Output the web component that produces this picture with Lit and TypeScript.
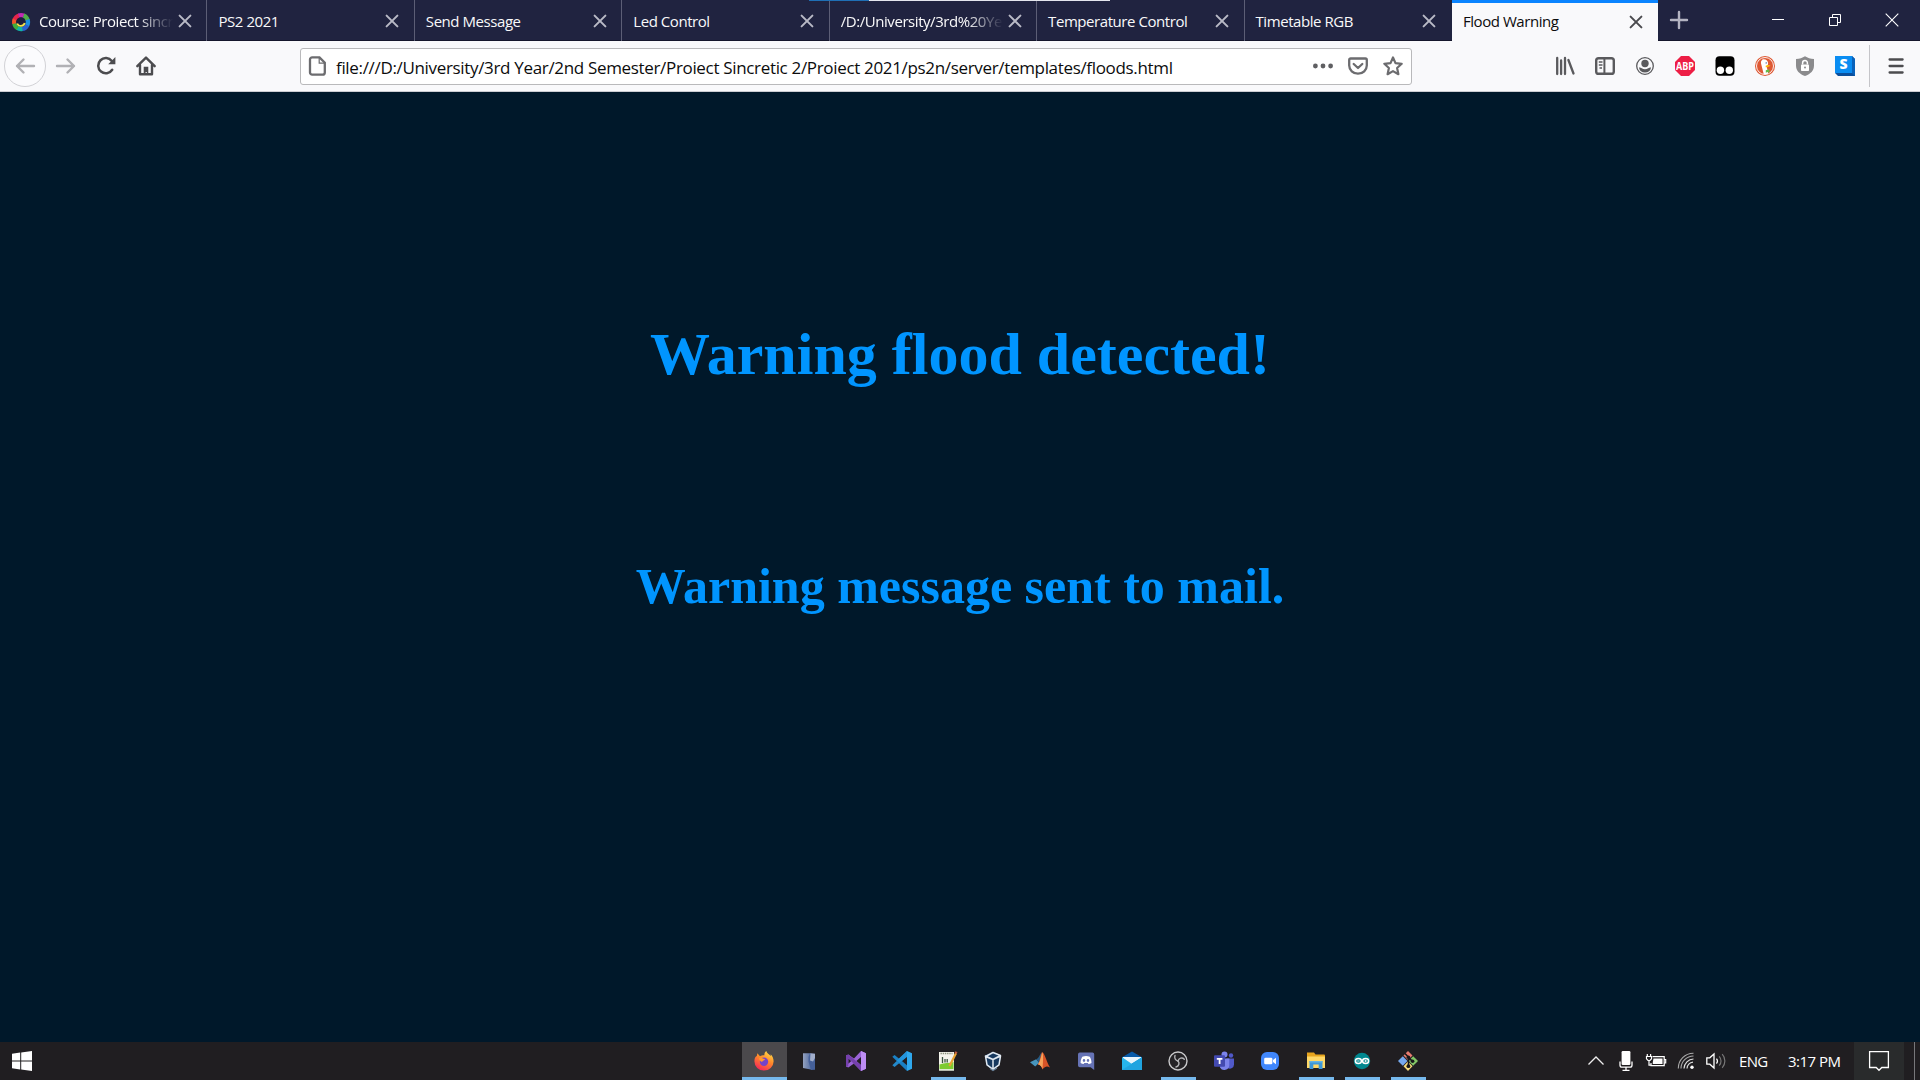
import { LitElement, html, css, svg, nothing, TemplateResult, SVGTemplateResult } from "lit";
import { customElement, property } from "lit/decorators.js";
import { classMap } from "lit/directives/class-map.js";

const icons: Record<string, SVGTemplateResult> = {
  moodle: svg`<g fill="none" stroke-width="4.2">
    <path d="M3.4 8A7 7 0 0 1 8 3.4" stroke="#e6254a"/><path d="M7.6 3.5A7 7 0 0 1 13 3.7" stroke="#c22bb4"/>
    <path d="M12.6 3.5A7 7 0 0 1 16.8 8.4" stroke="#4fae4a"/><path d="M16.6 7.6A7 7 0 0 1 16 13.6" stroke="#1b8fe0"/>
    <path d="M16.3 13.2A7 7 0 0 1 11 17" stroke="#2b62d0"/><path d="M11.4 17A7 7 0 0 1 6 15.8" stroke="#12b4a9"/>
    <path d="M6.6 16.2A7 7 0 0 1 3.2 11" stroke="#3fae3a"/><path d="M3.2 11.6A7 7 0 0 1 3.6 7.4" stroke="#f0552a"/></g>
    <circle cx="9.6" cy="9.8" r="4.3" fill="#1d1e3a"/><path d="M6.2 11.5a4 4 0 0 0 7.500-.5" fill="none" stroke="#f3e34a" stroke-width="1.8"/>`,
  back: svg`<path d="M19 10H2M8.500 3.500L2 10l6.500 6.500" fill="none" stroke="#b1b1b5" stroke-width="2.400" stroke-linecap="round" stroke-linejoin="round"/>`,
  forward: svg`<path d="M1 10h17M11.500 3.500L18 10l-6.500 6.500" fill="none" stroke="#b1b1b5" stroke-width="2.400" stroke-linecap="round" stroke-linejoin="round"/>`,
  reload: svg`<path d="M16.200 13.800A7.600 7.600 0 1 1 15.800 5" fill="none" stroke="#4c4c4f" stroke-width="2.500" stroke-linecap="round"/><path d="M19.400 1v7.200h-7.200z" fill="#4c4c4f"/>`,
  home: svg`<path d="M1.300 10.200L10 1.600l8.700 8.600M4 9v9.200h12V9" fill="none" stroke="#4c4c4f" stroke-width="2.400" stroke-linecap="round" stroke-linejoin="round"/><path d="M7.700 18v-7.300h4.600V18h-1.500v-2h-1.200v2z" fill="#4c4c4f"/>`,
  page: svg`<path d="M4.200 1.400h7.300l5.300 5.300v9.700a2.200 2.200 0 0 1-2.200 2.200H4.200A2.200 2.200 0 0 1 2 16.400V3.600a2.200 2.200 0 0 1 2.200-2.200z" fill="none" stroke="#6c6c6f" stroke-width="2.300"/><path d="M11.200 2v5.200h5.200" fill="none" stroke="#6c6c6f" stroke-width="1.200"/>`,
  dots: svg`<g fill="#5f5f62"><circle cx="2.400" cy="10" r="2.400"/><circle cx="10" cy="10" r="2.400"/><circle cx="17.600" cy="10" r="2.400"/></g>`,
  pocket: svg`<path d="M2.600 2.500h14.800a1.400 1.400 0 0 1 1.400 1.400v5.600a8.800 8.200 0 0 1-17.600 0V3.900a1.400 1.400 0 0 1 1.400-1.400z" fill="none" stroke="#6c6c6f" stroke-width="2.300"/><path d="M5.700 8l4.300 4 4.300-4" fill="none" stroke="#6c6c6f" stroke-width="2.300" stroke-linecap="round" stroke-linejoin="round"/>`,
  star: svg`<path d="M10 1.500l2.500 5.600 6.200.7-4.600 4.200 1.300 6.200L10 15.100l-5.400 3.100L5.900 12 1.300 7.800l6.200-.7z" fill="none" stroke="#6c6c6f" stroke-width="2.200" stroke-linejoin="round"/>`,
  library: svg`<path d="M2.200 2v16M6.100 4.500V18M10 2v16M13.400 4l5.100 13.500" fill="none" stroke="#5a5a5d" stroke-width="2.300" stroke-linecap="round"/>`,
  sidebar: svg`<rect x="1.200" y="2.200" width="17.600" height="15.600" rx="2.400" fill="none" stroke="#5a5a5d" stroke-width="2.400"/><path d="M9.400 2v16" stroke="#5a5a5d" stroke-width="2"/><path d="M3.800 6H7.500M3.800 9H7.500M4.500 12H7" stroke="#5a5a5d" stroke-width="1.300"/>`,
  account: svg`<circle cx="10" cy="10" r="8.300" fill="none" stroke="#5a5a5d" stroke-width="1.300"/><circle cx="10" cy="7.500" r="3.700" fill="#5a5a5d"/><path d="M3.900 11.500c1.500.2 2.200.2 2.800.7a6 6 0 0 0 6.600 0c.6-.5 1.300-.5 2.800-.7A6.400 6.400 0 0 1 10 16.600a6.400 6.400 0 0 1-6.100-5.100z" fill="#5a5a5d"/>`,
  abp: svg`<path d="M6 0h8l6 6v8l-6 6H6l-6-6V6z" fill="#ed1e45"/><text x="10" y="13.800" text-anchor="middle" font-family="Open Sans, sans-serif" font-weight="700" font-size="10.500" textLength="18" lengthAdjust="spacingAndGlyphs" fill="#fff">ABP</text>`,
  tamper: svg`<rect x=".5" y=".3" width="19" height="19.400" rx="4" fill="#000"/><circle cx="5.400" cy="14.300" r="3.700" fill="#fff"/><circle cx="14.300" cy="14.300" r="3.700" fill="#fff"/>`,
  duck: svg`<circle cx="10" cy="10" r="10" fill="#de5833"/><circle cx="10" cy="10" r="8.500" fill="none" stroke="#fff" stroke-width=".9"/><path d="M8.700 18L6.400 9C5.500 6 6 4.400 7.600 3.800 7 3.400 7.500 3 8.500 3.200c3 .1 4.600 1.800 4.600 4.300 0 1.500-1.200 2.300-1.200 4l1.300 6.300c-1.500.5-3 .6-4.500.2z" fill="#fff"/><path d="M10.700 9.700c1.500-1 3.500-.8 4.800-.2-1 1.300-2.900 1.900-4.800 1.800z" fill="#fdb90d"/><path d="M10.800 14.200l3.600-1v3.600l-1.800-.8-1.800.7z" fill="#65bc46"/><circle cx="11.200" cy="6.900" r=".7" fill="#2d4f8e"/>`,
  shield: svg`<path d="M10 .2c2.500 1.700 5.500 2.600 9 2.700v6.500c0 5-3.300 8.500-9 10.500-5.700-2-9-5.500-9-10.500V2.900C4.500 2.800 7.500 1.900 10 .2z" fill="#8b8b8d"/><rect x="6" y="8.500" width="8" height="6.500" rx=".8" fill="#fff"/><path d="M7.600 8.500V7a2.400 2.400 0 0 1 4.800 0v1.500" fill="none" stroke="#fff" stroke-width="1.500"/><circle cx="10" cy="11.600" r="1" fill="#8b8b8d"/>`,
  stylish: svg`<path d="M0 0h17l3 3v17H3l-3-3z" fill="#0b4f9c"/><path d="M0 0h17v17H0z" fill="#0a8df2"/><path d="M17 0l3 3v17l-3-3z" fill="#0a62ba"/><text x="8.500" y="13.300" text-anchor="middle" font-family="Open Sans, sans-serif" font-weight="800" font-size="14" fill="#fff">S</text>`,
  menu: svg`<path d="M3.600 3.500h13M3.600 10h13M3.600 16.500h13" stroke="#4c4c4f" stroke-width="2.300" stroke-linecap="round"/>`,
  plus: svg`<path d="M10 2v16M2 10h16" stroke="#b4b4c2" stroke-width="2.400" stroke-linecap="round"/>`,
  minimize: svg`<path d="M4 9.500h12" stroke="#fff" stroke-width="1"/>`,
  restore: svg`<path d="M4.500 7.500h8v8h-8zM7.500 7V4.500h8v8H13" fill="none" stroke="#fff" stroke-width="1"/>`,
  close: svg`<path d="M3.700 3.700l12.600 12.600M16.300 3.700L3.700 16.300" stroke="#fff" stroke-width="1.100"/>`,
  tabclose: svg`<path d="M4.600 4.600l10.800 10.800M15.400 4.600L4.600 15.400" stroke="currentColor" stroke-width="2" stroke-linecap="round"/>`,
  start: svg`<path d="M0 2.800l8.200-1.200v7.900H0zM9.200 1.400L20 0v9.500H9.200zM0 10.500h8.200v8L0 17.300zM9.200 10.500H20V20L9.200 18.600z" fill="#fff"/>`,
  firefox: svg`<defs><linearGradient id="fx" x1=".8" y1="0" x2=".3" y2="1"><stop offset="0" stop-color="#ffe14a"/><stop offset=".45" stop-color="#ff8a2a"/><stop offset="1" stop-color="#f5245a"/></linearGradient></defs>
    <path d="M3.400 2.200L6 5.200C7.300 4.300 9 4.200 10.400 4.200 10.200 2.500 11 .8 12.300 0c.5 2.200 3 3.300 4.300 5 .2-.6.200-1 0-1.800 2 2 3 4.500 3 7.200A9.600 9.400 0 0 1 10 19.600 9.500 9.400 0 0 1 .4 10.200C.4 7 1.700 5.500 2.800 5z" fill="url(#fx)"/><circle cx="10" cy="10.800" r="4.200" fill="#7443c9"/><path d="M5 7.300c2-1.300 4 .7 6 .7-.2 1.700-2.700 1.500-2.800 3C6.500 10.500 5 9 5 7.300z" fill="#ff982e"/>`,
  cabinet: svg`<defs><linearGradient id="cab"><stop offset="0" stop-color="#93a1be"/><stop offset="1" stop-color="#4f69a0"/></linearGradient></defs><path d="M3 2.200h8L9.500 6v4.500L12 18.800 3 17z" fill="url(#cab)"/><path d="M10 2.200l5 .5v16l-4 .2-2.500-8.400V6z" fill="#456099"/><path d="M10.500 2.200l4.500.5V7l-2 3.500-3-1z" fill="#d2d9e6" opacity=".65"/>`,
  vs: svg`<path d="M15 0L8 7.600 2.300 3.500 0 4.600v10.800l2.300 1.100L8 12.400 15 20l5-2.300V2.300zM2.300 7.200L5.200 10l-2.900 2.800zM15 6v8l-4.600-4z" fill="#9a63d6" fill-rule="evenodd"/><path d="M15 0l5 2.300v15.400L15 20z" fill="#bd8df4"/><path d="M0 4.600l2.300-1.100L15 14v6L2.300 7.200v8.200L0 15.400z" fill="#7540ad"/>`,
  vscode: svg`<path d="M15 0l5 2.300v15.400L15 20z" fill="#2fa8ed"/><path d="M15 0v5.700L2.600 16 .3 14.300z" fill="#2489ca"/><path d="M.3 5.700L2.600 4 15 14.300V20z" fill="#1a80c4"/><path d="M15 0v5.700L7.300 12 4.800 9.600z" fill="#2394dc"/>`,
  notepad: svg`<path d="M1 1h15v18.500H1z" fill="#f4f4ec"/><path d="M1.500 13.500c5-2 9-1 14-2.500V18h-14z" fill="#7dcb31"/><path d="M1 18h15v1.500H1z" fill="#dfe9d4"/><path d="M2.500 2.400h12" stroke="#8c927e" stroke-width="1.500" stroke-dasharray="1.400 .8"/><path d="M4.500 6v6M7 8v3.500M9.200 8v3.500" stroke="#3c5440" stroke-width="1.300"/><path d="M18 2.200L11.500 15" stroke="#e7a334" stroke-width="2.200"/><path d="M17 1l2 1.200" stroke="#c35b3d" stroke-width="2"/>`,
  vbox: svg`<g transform="translate(-1)"><path d="M10 .8l8 3.400-1.500 10L10 19 3.500 14.200 2 4.200z" fill="#17395f"/><path d="M10 1.500l7.500 3L10 8.500l-7.500-3zM2.500 5L10 8.500v9.800L4 13.800zM17.500 5L10 8.500v9.800l6-4.500z" fill="none" stroke="#e1e9f1" stroke-width="1.500" stroke-linejoin="round"/><path d="M7 17.500l3 2 4-2.500" fill="none" stroke="#6b849c" stroke-width="1.200"/></g>`,
  matlab: svg`<path d="M0 11.300l6.200-3 3 3.500-4 3.600z" fill="#4795bd"/><path d="M6.200 8.300c3-1 3-4.800 6-7.300l-3 10.800z" fill="#275b84"/><path d="M12.200 1C14.500 1.500 17 12 20 16.500c-3-1.500-4.600-1.500-7.500 2-.8-2.500-2-4.600-4.600-5.200 2.300-2.600 2.300-9.300 4.300-12.300z" fill="#d85427"/><path d="M12.500 1.500c1 2 .6 10 0 16.500-.8-2.300-2-4-4.600-4.700 2.600-3 3-8.500 4.600-11.800z" fill="#f5a35a"/>`,
  discord: svg`<path d="M4 1.500h12.500a1.700 1.700 0 0 1 1.700 1.700V19l-3.600-2.800H4a1.900 1.900 0 0 1-2-1.800v-11a1.900 1.900 0 0 1 2-1.900z" fill="#6673b5"/><path d="M6.300 5.700c2.500-1 5-1 7.500 0 1.200 1.800 1.700 3.900 1.700 6.200-1 .8-2 1.100-3 1.200l-.7-1.200H8.300l-.7 1.200c-1-.1-2-.4-3-1.200 0-2.300.5-4.400 1.700-6.200z" fill="#fff"/><ellipse cx="8" cy="9.500" rx="1.200" ry="1.400" fill="#6673b5"/><ellipse cx="12" cy="9.500" rx="1.200" ry="1.400" fill="#6673b5"/>`,
  mail: svg`<path d="M0 6.200L10 .5l10 5.700v4H0z" fill="#075aa8"/><path d="M1 6h18v7H1z" fill="#e8f5fc"/><path d="M0 6.200l10 7-10 5.500z" fill="#22b3ea"/><path d="M20 6.200V19H0v-.5z" fill="#28b5ed"/><path d="M0 19L20 6.200V19z" fill="#168fd0"/><path d="M0 6.200L10 13 20 6.200V19H0z" fill="#2ab6ec" opacity=".55"/>`,
  obs: svg`<circle cx="10" cy="10" r="9" fill="#252326" stroke="#c9c9cb" stroke-width="1.400"/><g fill="none" stroke="#b5b5b8" stroke-width="1.400" stroke-linecap="round"><path d="M10 10C7.500 9.500 6 7 7 4.500"/><path d="M10 10c.8-3 4.200-4 6.300-1.800"/><path d="M10 10c2 2 .8 5.500-2 6"/></g>`,
  teams: svg`<circle cx="10.500" cy="3.500" r="3" fill="#7b83eb"/><circle cx="17" cy="4.500" r="2.200" fill="#5059c9"/><path d="M12.500 7.500H20v6a4.200 4.200 0 0 1-6 3.700z" fill="#5059c9"/><path d="M6 7.500h9.300v6.700a5 5 0 0 1-9.300 2.300z" fill="#7b83eb"/><rect x="0" y="4.300" width="11" height="11.400" rx="1" fill="#434ab0"/><path d="M2.800 7h5.600v1.700H6.500V13H4.700V8.700H2.800z" fill="#fff"/>`,
  zoom: svg`<rect x="1" y="1" width="18" height="18" rx="6" fill="#4087fc"/><rect x="4.200" y="6.700" width="8.200" height="6.600" rx="1.400" fill="#fff"/><path d="M13 9l3-2.200v6.400L13 11z" fill="#fff"/>`,
  explorer: svg`<path d="M1 1.500h7l1.500 2H18a1 1 0 0 1 1 1V17H1z" fill="#e8a51e"/><path d="M1 5.500h18V17H1z" fill="#ffd867"/><path d="M3.500 18V10h13v8h-3.800v-4.500H7.300V18z" fill="#3d97d7"/><path d="M3.500 10h13v1.500h-13z" fill="#63b4e5"/>`,
  arduino: svg`<circle cx="10" cy="10" r="8.200" fill="#00878f"/><g fill="none" stroke="#fff" stroke-width="1.500"><ellipse cx="6.400" cy="10" rx="3" ry="2.500"/><ellipse cx="13.600" cy="10" rx="3" ry="2.500"/><path d="M5.200 10h2.400M12.400 10h2.400M13.600 8.800v2.400" stroke-width=".8"/></g>`,
  git: svg`<path d="M10 0l4.500 4.500L10 9 5.500 4.500z" fill="#e57b70"/><path d="M4.800 5.200l4.700 4.700-4.700 4.800L0 10z" fill="#76a9ee"/><path d="M15.200 5.200L20 10l-4.800 4.700-4.700-4.800z" fill="#82c766"/><path d="M10 10.600l4.500 4.600L10 20l-4.500-4.800z" fill="#f7dc7b"/><path d="M7 2.500l3.500 3.800V15M10.500 6.500l4 3.800" fill="none" stroke="#17171a" stroke-width="1.600"/><circle cx="10.400" cy="6.300" r="1.800" fill="#17171a"/><circle cx="10.400" cy="15.200" r="1.900" fill="#17171a"/><circle cx="14.600" cy="10.300" r="1.800" fill="#17171a"/>`,
  chevron: svg`<path d="M2.500 13.500L10 6l7.500 7.500" fill="none" stroke="#eee" stroke-width="1.300"/>`,
  mic: svg`<rect x="5.600" y="0" width="8.800" height="14" rx="1.200" fill="#fff"/><path d="M4 10.500v3.700c0 1.300.8 1.900 2 1.900h8c1.200 0 2-.6 2-1.900v-3.700M10 16v3M6.500 19.300h7" fill="none" stroke="#fff" stroke-width="1.300"/>`,
  battery: svg`<path d="M6.500 5.700h11.700v9H5V12M18.700 8.500h1v3.500h-1" fill="none" stroke="#fff" stroke-width="1.200"/><path d="M7.500 7.500h9v5.500H6.800V11z" fill="#fff"/><path d="M1.300 3v2M4.600 3v2M.5 5.500h5v2.300L4 9.500H2L.5 7.800zM3 9.500v4.700h2" fill="none" stroke="#fff" stroke-width="1.200"/>`,
  wifi: svg`<g transform="translate(1.500)"><circle cx="14.500" cy="16.300" r="1.700" fill="#fff"/><path d="M9.500 17.500a6.500 6.500 0 0 1 6-6.300M6.500 17.500A10 10 0 0 1 16 8" fill="none" stroke="#ddd" stroke-width="1.200"/><path d="M3.500 17.500A12.500 12.500 0 0 1 16 5M.8 17.500A15 15 0 0 1 16 2.300" fill="none" stroke="#aaa" stroke-width="1.100"/></g>`,
  volume: svg`<path d="M.8 6.800h3L8 3v14l-4.200-3.800h-3z" fill="none" stroke="#fff" stroke-width="1.300"/><path d="M10.500 7.500a4 4 0 0 1 0 5" fill="none" stroke="#fff" stroke-width="1.200"/><path d="M13.200 5.300a7 7 0 0 1 0 9.400M16.200 3.200a10 10 0 0 1 0 13.600" fill="none" stroke="#777" stroke-width="1.200"/>`,
  notice: svg`<path d="M.6.700h18.800v15.800h-6.600L10 19.300l-2.800-2.800H.6z" fill="none" stroke="#fff" stroke-width="1.300"/>`,
};

@customElement("ui-icon")
class UiIcon extends LitElement {
  @property() name = "";
  static styles = css`
    :host { display: block; width: 20px; height: 20px; flex: none; }
    svg { display: block; width: 20px; height: 20px; overflow: visible; }
  `;
  render() {
    return html`<svg viewBox="0 0 20 20">${icons[this.name]}</svg>`;
  }
}

interface Tab { title: string; icon?: string; active?: boolean; cut?: boolean; }

const tabs: Tab[] = [
  { title: "Course: Proiect sincr", icon: "moodle", cut: true },
  { title: "PS2 2021" },
  { title: "Send Message" },
  { title: "Led Control" },
  { title: "/D:/University/3rd%20Ye", cut: true },
  { title: "Temperature Control" },
  { title: "Timetable RGB" },
  { title: "Flood Warning", active: true },
];

const apps: { icon: string; open?: boolean; active?: boolean }[] = [
  { icon: "firefox", active: true }, { icon: "cabinet" }, { icon: "vs" }, { icon: "vscode" },
  { icon: "notepad", open: true }, { icon: "vbox" }, { icon: "matlab" }, { icon: "discord" },
  { icon: "mail" }, { icon: "obs", open: true }, { icon: "teams" }, { icon: "zoom" },
  { icon: "explorer", open: true }, { icon: "arduino", open: true }, { icon: "git", open: true },
];

const extensions = ["library", "sidebar", "account", "abp", "tamper", "duck", "shield", "stylish"];

@customElement("app-root")
class AppRoot extends LitElement {
  static styles = css`
    :host { display: block; }
    * { box-sizing: border-box; }
    .screen { position: relative; display: flex; flex-direction: column; width: 1920px; height: 1080px; overflow: hidden; background: #00182a; font-family: "Open Sans", "Noto Sans", sans-serif; }
    .edge { position: absolute; top: 0; left: 809px; display: flex; width: 301px; height: 1px; }
    .edge-blue { width: 60px; background: #1f6fb5; }
    .edge-white { flex: 1; background: #e4e6ee; }
    .strip { display: flex; height: 41px; flex: none; background: #202340; border-bottom: 1px solid #15162c; }
    .tabs { display: grid; grid-template-columns: repeat(7, 207.430px) 206px; height: 41px; }
    .tab { display: flex; align-items: center; height: 41px; padding: 2px 11.500px 0 11px; border-right: 1px solid #5c5e76; color: #f9f9fa; font-size: 15px; letter-spacing: -0.440px; min-width: 0; }
    .tab.last { border-right-color: transparent; }
    .tab.active { border: 0; border-top: 3px solid #0a84ff; background: #f9f9fb; color: #0c0c0d; padding-top: 0; padding-bottom: 1px; }
    .title { flex: 1; min-width: 0; white-space: nowrap; line-height: 24px; padding-bottom: 2px; }
    .title.cut { -webkit-mask-image: linear-gradient(to right, #000 calc(100% - 36px), transparent); mask-image: linear-gradient(to right, #000 calc(100% - 36px), transparent); }
    .favicon { margin-right: 8.500px; margin-left: -0.500px; }
    .tab-x { color: #b9bac6; margin-left: 2px; position: relative; top: -1px; }
    .active .tab-x { color: #4a4a4e; top: 0; }
    .plus { margin: 10px 0 0 11px; }
    .controls { display: flex; gap: 37px; margin: 10px 18.500px 0 auto; }
    .bar { display: flex; align-items: center; height: 51px; flex: none; padding: 0 14px 0 4px; background: #f9f9fb; border-bottom: 1px solid #ccccd2; }
    .nav { display: flex; align-items: center; gap: 20px; }
    .round { display: flex; align-items: center; justify-content: center; width: 42px; height: 42px; margin-right: -10px; border: 1px solid #d2d2d6; border-radius: 50%; background: #fbfbfd; }
    .url { display: flex; align-items: center; width: 1112px; height: 37px; margin-left: 144px; padding: 0 8px 0 7px; border: 1px solid #b9b9bb; border-radius: 3px; background: #fff; }
    .address { flex: 1; margin-left: 8px; font-size: 17px; letter-spacing: -0.330px; color: #0c0c0d; line-height: 24px; white-space: nowrap; padding-top: 3px; }
    .url-tools { display: flex; gap: 15px; }
    .ext { display: flex; gap: 20px; margin-left: auto; }
    .rule { width: 1px; height: 42px; margin: 0 16px 0 14px; background: #c5c5c9; }
    .page { flex: 1; display: flex; flex-direction: column; align-items: center; padding-top: 227px; color: #0095ff; font-family: "Liberation Serif", "Times New Roman", serif; }
    h1, h2 { margin: 0; font-weight: 700; white-space: nowrap; }
    h1 { font-size: 60px; line-height: 70px; }
    h2 { font-size: 50px; line-height: 58px; margin-top: 168px; }
    .taskbar { display: flex; height: 38px; flex: none; background: #201e21; color: #fff; }
    .start { margin: 9px 0 0 12px; }
    .apps { display: flex; margin-left: 709px; }
    .app { display: flex; flex-direction: column; align-items: center; width: 46px; height: 38px; padding-top: 9px; }
    .app.current { background: linear-gradient(to right, transparent 1px, #4b494c 1px); }
    .mark { width: 35px; height: 3px; margin-top: 6px; background: #76b9ed; }
    .current .mark { width: 45px; margin-left: 1px; }
    .tray { display: flex; align-items: center; margin-left: auto; font-size: 15px; }
    .tray-icons { display: flex; gap: 10px; }
    .lang { margin-left: 13px; width: 49px; letter-spacing: -0.700px; }
    .clock { width: 66px; letter-spacing: -0.500px; white-space: nowrap; }
    .notices { display: flex; align-items: center; justify-content: center; width: 50px; height: 38px; background: #292b2c; }
    .desk { width: 6px; height: 38px; margin-left: 10px; border-left: 1px solid #77777a; }
  `;

  private tab(t: Tab, i: number): TemplateResult {
    return html`<div class=${classMap({ tab: true, active: !!t.active, last: i === 6 })}>
      ${t.icon ? html`<ui-icon class="favicon" name=${t.icon}></ui-icon>` : nothing}
      <span class=${classMap({ title: true, cut: !!t.cut })}>${t.title}</span>
      <ui-icon class="tab-x" name="tabclose"></ui-icon>
    </div>`;
  }

  render() {
    return html`<div class="screen">
      <div class="strip">
        <div class="tabs">${tabs.map((t, i) => this.tab(t, i))}</div>
        <ui-icon class="plus" name="plus"></ui-icon>
        <div class="controls">
          <ui-icon name="minimize"></ui-icon><ui-icon name="restore"></ui-icon><ui-icon name="close"></ui-icon>
        </div>
      </div>
      <div class="bar">
        <div class="nav">
          <div class="round"><ui-icon name="back"></ui-icon></div>
          <ui-icon name="forward"></ui-icon><ui-icon name="reload"></ui-icon><ui-icon name="home"></ui-icon>
        </div>
        <div class="url">
          <ui-icon name="page"></ui-icon>
          <span class="address">file:///D:/University/3rd Year/2nd Semester/Proiect Sincretic 2/Proiect 2021/ps2n/server/templates/floods.html</span>
          <div class="url-tools"><ui-icon name="dots"></ui-icon><ui-icon name="pocket"></ui-icon><ui-icon name="star"></ui-icon></div>
        </div>
        <div class="ext">${extensions.map((e) => html`<ui-icon name=${e}></ui-icon>`)}</div>
        <div class="rule"></div>
        <ui-icon name="menu"></ui-icon>
      </div>
      <main class="page">
        <h1>Warning flood detected!</h1>
        <h2>Warning message sent to mail.</h2>
      </main>
      <div class="taskbar">
        <ui-icon class="start" name="start"></ui-icon>
        <div class="apps">
          ${apps.map((a) => html`<div class=${classMap({ app: true, current: !!a.active })}>
            <ui-icon name=${a.icon}></ui-icon>${a.open || a.active ? html`<div class="mark"></div>` : nothing}
          </div>`)}
        </div>
        <div class="tray">
          <div class="tray-icons">
            ${["chevron", "mic", "battery", "wifi", "volume"].map((n) => html`<ui-icon name=${n}></ui-icon>`)}
          </div>
          <span class="lang">ENG</span>
          <span class="clock">3:17 PM</span>
          <div class="notices"><ui-icon name="notice"></ui-icon></div>
          <div class="desk"></div>
        </div>
      </div>
      <div class="edge"><div class="edge-blue"></div><div class="edge-white"></div></div>
    </div>`;
  }
}
